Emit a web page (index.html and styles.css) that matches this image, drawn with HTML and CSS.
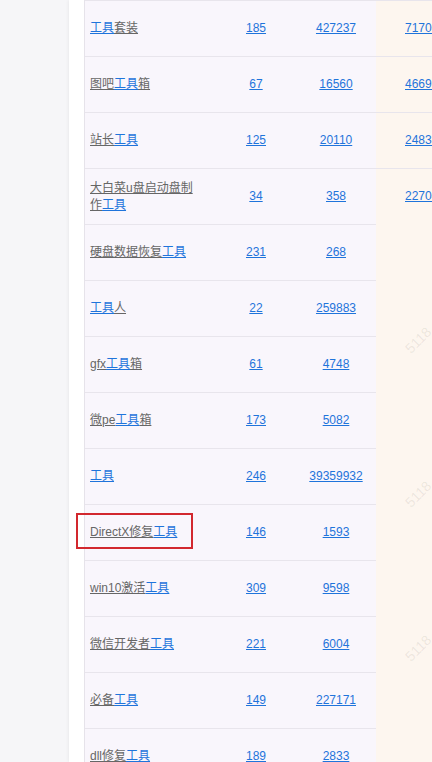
FILE: index.html
```html
<!DOCTYPE html>
<html lang="zh-CN">
<head>
  <meta charset="UTF-8">
  <meta name="viewport" content="width=device-width, initial-scale=1.0">
  <title>工具 - 长尾词</title>
  <link rel="stylesheet" href="styles.css">
</head>
<body>
  <div class="page">
    <div class="gutter"></div>
    <div class="panel">
      <div class="table-wrap">
        <table class="words">
          <tr>
            <td class="kw"><a class="hl" href="#">工具</a><a href="#">套装</a></td>
            <td class="num"><a href="#">185</a></td>
            <td class="num"><a href="#">427237</a></td>
            <td class="extra"><a href="#">717035</a></td>
          </tr>
          <tr>
            <td class="kw"><a href="#">图吧</a><a class="hl" href="#">工具</a><a href="#">箱</a></td>
            <td class="num"><a href="#">67</a></td>
            <td class="num"><a href="#">16560</a></td>
            <td class="extra"><a href="#">466912</a></td>
          </tr>
          <tr>
            <td class="kw"><a href="#">站长</a><a class="hl" href="#">工具</a></td>
            <td class="num"><a href="#">125</a></td>
            <td class="num"><a href="#">20110</a></td>
            <td class="extra"><a href="#">248315</a></td>
          </tr>
          <tr>
            <td class="kw"><a href="#">大白菜u盘启动盘制作</a><a class="hl" href="#">工具</a></td>
            <td class="num"><a href="#">34</a></td>
            <td class="num"><a href="#">358</a></td>
            <td class="extra"><a href="#">227046</a></td>
          </tr>
          <tr>
            <td class="kw"><a href="#">硬盘数据恢复</a><a class="hl" href="#">工具</a></td>
            <td class="num"><a href="#">231</a></td>
            <td class="num"><a href="#">268</a></td>
            <td class="blank"></td>
          </tr>
          <tr>
            <td class="kw"><a class="hl" href="#">工具</a><a href="#">人</a></td>
            <td class="num"><a href="#">22</a></td>
            <td class="num"><a href="#">259883</a></td>
            <td class="blank"></td>
          </tr>
          <tr>
            <td class="kw"><a href="#">gfx</a><a class="hl" href="#">工具</a><a href="#">箱</a></td>
            <td class="num"><a href="#">61</a></td>
            <td class="num"><a href="#">4748</a></td>
            <td class="blank"></td>
          </tr>
          <tr>
            <td class="kw"><a href="#">微pe</a><a class="hl" href="#">工具</a><a href="#">箱</a></td>
            <td class="num"><a href="#">173</a></td>
            <td class="num"><a href="#">5082</a></td>
            <td class="blank"></td>
          </tr>
          <tr>
            <td class="kw"><a class="hl" href="#">工具</a></td>
            <td class="num"><a href="#">246</a></td>
            <td class="num"><a href="#">39359932</a></td>
            <td class="blank"></td>
          </tr>
          <tr>
            <td class="kw"><a href="#">DirectX修复</a><a class="hl" href="#">工具</a></td>
            <td class="num"><a href="#">146</a></td>
            <td class="num"><a href="#">1593</a></td>
            <td class="blank"></td>
          </tr>
          <tr>
            <td class="kw"><a href="#">win10激活</a><a class="hl" href="#">工具</a></td>
            <td class="num"><a href="#">309</a></td>
            <td class="num"><a href="#">9598</a></td>
            <td class="blank"></td>
          </tr>
          <tr>
            <td class="kw"><a href="#">微信开发者</a><a class="hl" href="#">工具</a></td>
            <td class="num"><a href="#">221</a></td>
            <td class="num"><a href="#">6004</a></td>
            <td class="blank"></td>
          </tr>
          <tr>
            <td class="kw"><a href="#">必备</a><a class="hl" href="#">工具</a></td>
            <td class="num"><a href="#">149</a></td>
            <td class="num"><a href="#">227171</a></td>
            <td class="blank"></td>
          </tr>
          <tr>
            <td class="kw"><a href="#">dll修复</a><a class="hl" href="#">工具</a></td>
            <td class="num"><a href="#">189</a></td>
            <td class="num"><a href="#">2833</a></td>
            <td class="blank"></td>
          </tr>
        </table>

        <span class="mark mark-1">5118</span>
        <span class="mark mark-2">5118</span>
        <span class="mark mark-3">5118</span>
        <div class="highlight-box"></div>
      </div>
    </div>
  </div>
</body>
</html>
```

FILE: styles.css
```css
body {
  margin: 0;
  background-color: #f6f6f8;
  font-family: "Liberation Sans", Arial, "Noto Sans CJK SC", sans-serif;
  font-size: 12px;
  overflow: hidden;
}
.page {
  display: flex;
  height: 762px;
}
.gutter {
  width: 69px;
  flex: none;
}
.panel {
  flex: 1;
  background-color: #fff;
  padding-left: 15px;
  box-shadow: 0 0 4px rgba(0, 0, 0, 0.08);
  overflow: hidden;
}
.table-wrap {
  position: relative;
  height: 100%;
  border-left: 1px solid #e6e3ea;
  background: linear-gradient(to right, #f9f6fc 291px, #fdf6ef 291px);
}
.words {
  border-collapse: collapse;
  table-layout: fixed;
  width: 380px;
}
.words td {
  height: 55px;
  border-top: 1px solid #e8e5ec;
  line-height: 17px;
  vertical-align: middle;
  padding: 0;
}
.words td.blank {
  border-top: none;
}
.words td.kw {
  width: 106px;
  padding: 0 20px 0 5px;
}
.words td.num {
  width: 80px;
  text-align: center;
}
.words td.extra {
  padding-left: 29px;
  white-space: nowrap;
}
.words a {
  color: #666;
  text-decoration: underline;
}
.words a.hl,
.words td.num a,
.words td.extra a {
  color: #1f74db;
}
.mark {
  position: absolute;
  left: 318px;
  color: rgba(120, 110, 100, 0.13);
  font-size: 14px;
  transform: rotate(-45deg);
}
.mark-1 { top: 332px; }
.mark-2 { top: 486px; }
.mark-3 { top: 640px; }
.highlight-box {
  position: absolute;
  left: -9px;
  top: 513px;
  width: 113px;
  height: 32px;
  border: 2px solid #d2282e;
}
```
